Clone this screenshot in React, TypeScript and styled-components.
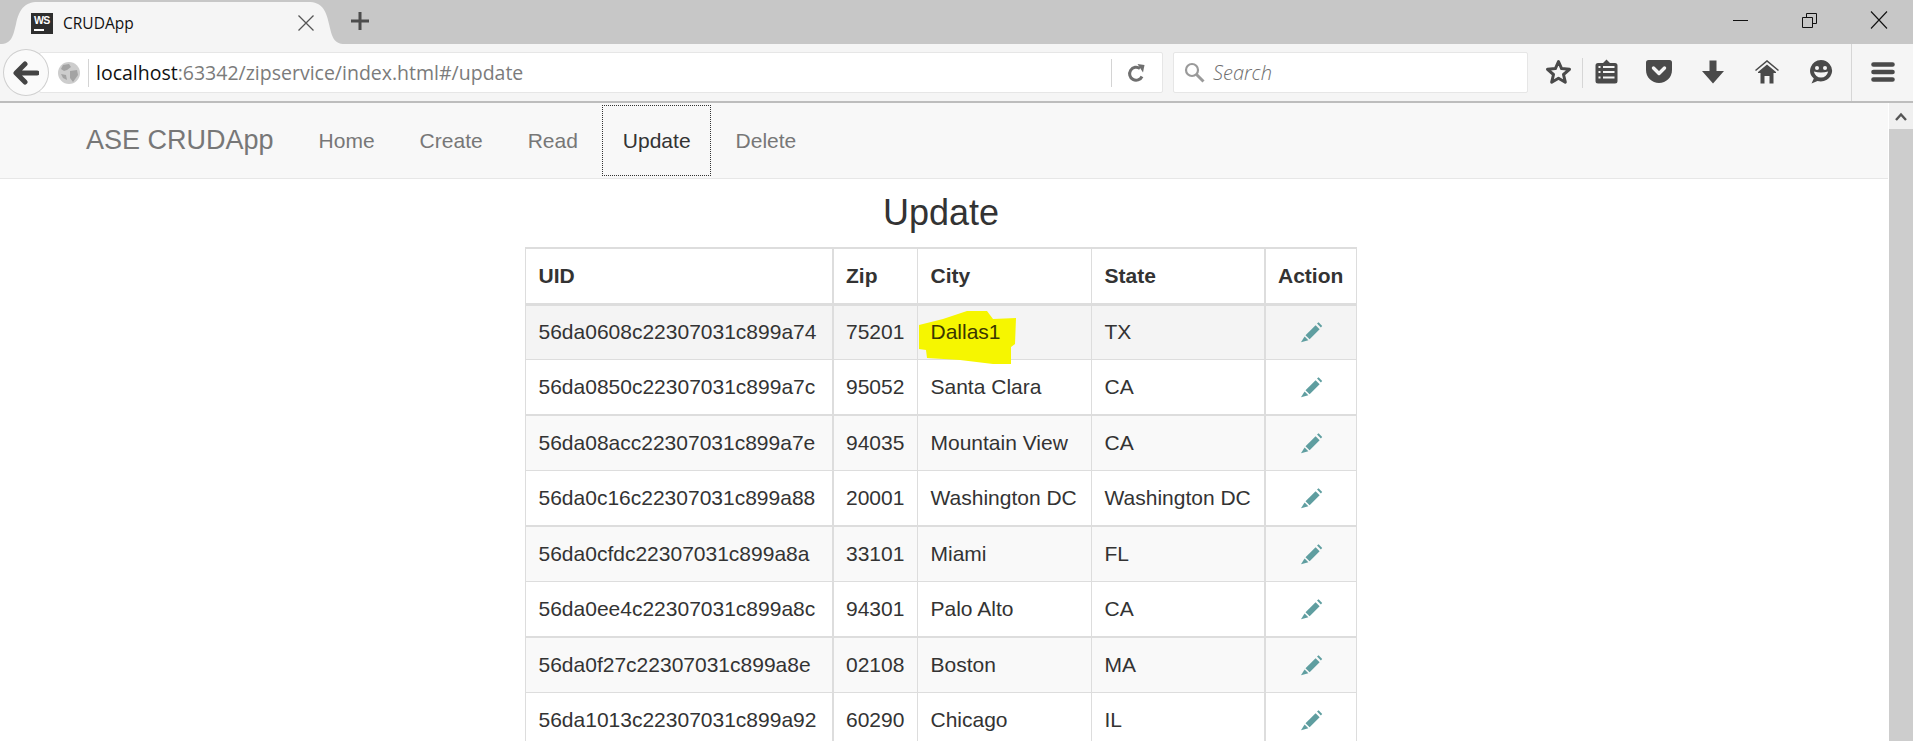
import React from "react";
import styled, { createGlobalStyle } from "styled-components";

const GlobalStyle = createGlobalStyle`
    html, body {
        margin: 0;
        height: 100%;
        overflow: hidden;
        background: white;
    }
    #root {
        height: 100%;
    }
`;

const Page = styled.div`
    display: flex;
    flex-direction: column;
    height: 741px;
    overflow: hidden;
    font-family: "Liberation Sans", Arial, sans-serif;
`;

/* browser chrome */
const TabStrip = styled.div`
    flex: none;
    display: flex;
    align-items: flex-end;
    height: 44px;
    background: #c7c7c7;
`;
const Tab = styled.div`
    position: relative;
    display: flex;
    align-items: center;
    box-sizing: border-box;
    width: 345px;
    height: 42px;
    padding: 0 31px;
`;
const TabShape = styled.svg`
    position: absolute;
    left: 0;
    top: 0;
`;
const WsIcon = styled.div`
    position: relative;
    flex: none;
    box-sizing: border-box;
    width: 22px;
    height: 21px;
    padding: 2px 0 0 3px;
    background: #2e2e2e;
    color: white;
    font-size: 10.5px;
    font-weight: bold;
    line-height: 11px;
    letter-spacing: -0.6px;
    &::after {
        content: "";
        position: absolute;
        left: 3px;
        bottom: 3px;
        width: 10px;
        height: 2px;
        background: white;
    }
`;
const TabTitle = styled.span`
    position: relative;
    margin-left: 10px;
    font-family: "Open Sans", sans-serif;
    font-size: 15.5px;
    color: #111;
`;
const TabClose = styled.svg`
    position: relative;
    margin-left: auto;
    margin-right: -1px;
`;
const NewTab = styled.svg`
    margin: 0 0 3px 5px;
    align-self: center;
`;
const WindowControls = styled.div`
    display: flex;
    margin-left: auto;
    align-self: stretch;
`;
const WindowButton = styled.div`
    display: flex;
    align-items: center;
    justify-content: center;
    width: 69px;
    padding-bottom: 4px;
    box-sizing: border-box;
`;

const Toolbar = styled.div`
    flex: none;
    display: flex;
    align-items: center;
    height: 57px;
    background: #f5f5f5;
    border-bottom: 2px solid #bdbdbd;
`;
const BackButton = styled.div`
    position: relative;
    z-index: 1;
    flex: none;
    display: flex;
    align-items: center;
    justify-content: center;
    box-sizing: border-box;
    width: 46px;
    height: 47px;
    margin-left: 3px;
    border: 1px solid #cfcfcf;
    border-radius: 50%;
    background: #fafafa;
`;
const UrlBar = styled.div`
    flex: none;
    display: flex;
    align-items: center;
    box-sizing: border-box;
    width: 1124px;
    height: 41px;
    margin-left: -10px;
    padding-left: 18px;
    background: white;
    border: 1px solid #e6e6e6;
    border-radius: 2px;
`;
const UrlDivider = styled.div`
    flex: none;
    width: 1px;
    height: 28px;
    background: #d4d4d4;
    margin: 0 7px 0 8px;
`;
const UrlText = styled.div`
    font-family: "Open Sans", sans-serif;
    font-size: 19.5px;
    color: #7b7b7b;
    white-space: nowrap;
    b {
        font-weight: normal;
        color: #111;
    }
`;
const ReloadArea = styled.div`
    display: flex;
    align-items: center;
    margin-left: auto;
    margin-right: 15px;
    svg {
        margin-left: 15px;
    }
`;
const ReloadDivider = styled.div`
    width: 1px;
    height: 28px;
    background: #d4d4d4;
`;
const SearchBox = styled.div`
    flex: none;
    display: flex;
    align-items: center;
    box-sizing: border-box;
    width: 355px;
    height: 41px;
    margin: 0 5px 0 10px;
    padding-left: 10px;
    background: white;
    border: 1px solid #e6e6e6;
    border-radius: 2px;
`;
const SearchHint = styled.span`
    margin-left: 8px;
    font-family: "Open Sans", sans-serif;
    font-size: 20px;
    font-style: italic;
    font-weight: 300;
    color: #6e6e6e;
`;
const IconSlot = styled.div<{ $width: number; $left?: number }>`
    flex: none;
    display: flex;
    align-items: center;
    justify-content: center;
    width: ${(p) => p.$width}px;
    margin-top: -2px;
    margin-left: ${(p) => p.$left || 0}px;
`;
const ToolDivider = styled.div<{ $height: number; $left: number }>`
    flex: none;
    width: 1px;
    height: ${(p) => p.$height}px;
    margin-left: ${(p) => p.$left}px;
    background: #d6d6d6;
`;

/* page inside the browser */
const Viewport = styled.div`
    flex: 1;
    display: flex;
    min-height: 0;
`;
const Content = styled.div`
    flex: 1;
    min-width: 0;
    color: #333;
    font-size: 21px;
    line-height: 30px;
`;
const Scrollbar = styled.div`
    flex: none;
    display: flex;
    flex-direction: column;
    width: 24px;
    margin-left: 1px;
    background: #cdcdcd;
`;
const ScrollUp = styled.div`
    display: flex;
    align-items: center;
    justify-content: center;
    height: 26px;
    background: #f0f0f0;
`;

const Navbar = styled.nav`
    display: flex;
    height: 75px;
    padding-left: 63.5px;
    background: #f8f8f8;
    border-bottom: 1px solid #e7e7e7;
`;
const Brand = styled.div`
    padding: 0 22.5px;
    font-size: 27px;
    line-height: 75px;
    color: #777;
`;
const NavItem = styled.div<{ $active?: boolean }>`
    box-sizing: border-box;
    padding: 0 22.5px;
    line-height: 75px;
    color: ${(p) => (p.$active ? "#333" : "#777")};
    ${(p) =>
        p.$active &&
        `
        outline: 1px dotted #333;
        outline-offset: -3px;
    `}
`;

const Section = styled.div`
    width: 832px;
    margin-left: 525px;
`;
const Title = styled.h2`
    margin: 0;
    padding: 14px 0 14px;
    font-size: 36px;
    font-weight: normal;
    line-height: 40px;
    text-align: center;
    color: #333;
`;
const Table = styled.table`
    width: 831px;
    table-layout: fixed;
    border-collapse: collapse;
    border: 1px solid #ddd;
    border-top: 2px solid #ddd;
    tbody > tr:nth-child(odd):not(:first-child) > td {
        border-top-width: 2px;
    }
`;
const Head = styled.th`
    box-sizing: border-box;
    height: 56px;
    padding: 0 12.5px;
    text-align: left;
    font-weight: bold;
    border: 1px solid #ddd;
    border-bottom: 3px solid #ddd;
    &:nth-child(2),
    &:nth-child(5) {
        border-left-width: 2px;
    }
`;
const Row = styled.tr<{ $shade?: string }>`
    background: ${(p) => p.$shade || "white"};
`;
const Cell = styled.td<{ $center?: boolean }>`
    position: relative;
    box-sizing: border-box;
    height: 55.5px;
    padding: 0 12.5px;
    white-space: nowrap;
    text-align: ${(p) => (p.$center ? "center" : "left")};
    border: 1px solid #ddd;
    &:nth-child(2),
    &:nth-child(5) {
        border-left-width: 2px;
    }
`;
const Marked = styled.span`
    position: relative;
    color: #3b3700;
`;
const Highlight = styled.svg`
    position: absolute;
    left: 0;
    top: 0;
    overflow: visible;
`;
const EditIcon = styled.svg`
    display: block;
    margin: 0 auto;
`;

const rows = [
    ["56da0608c22307031c899a74", "75201", "Dallas1", "TX"],
    ["56da0850c22307031c899a7c", "95052", "Santa Clara", "CA"],
    ["56da08acc22307031c899a7e", "94035", "Mountain View", "CA"],
    ["56da0c16c22307031c899a88", "20001", "Washington DC", "Washington DC"],
    ["56da0cfdc22307031c899a8a", "33101", "Miami", "FL"],
    ["56da0ee4c22307031c899a8c", "94301", "Palo Alto", "CA"],
    ["56da0f27c22307031c899a8e", "02108", "Boston", "MA"],
    ["56da1013c22307031c899a92", "60290", "Chicago", "IL"],
];

const shadeFor = (i: number) => {
    if (i === 0) return "#f4f4f4";
    return i % 2 === 0 ? "#f9f9f9" : "white";
};

const Pencil = () => (
    <EditIcon width="24" height="24" viewBox="0 0 24 24">
        <path d="M6.5 15.2 L16.6 5.3 L20.6 9.3 L10.6 19.3 Z" fill="#5f9ea0" />
        <path d="M18 3.6 L19.6 2.3 L23.2 5.9 L21.9 7.5 Z" fill="#5f9ea0" />
        <path d="M5.6 16.4 L9.4 20.2 L2 22.2 Z" fill="#5f9ea0" />
    </EditIcon>
);

const App = () => {
    return (
        <Page>
            <GlobalStyle />
            <TabStrip>
                <Tab>
                    <TabShape width="345" height="42" viewBox="0 0 345 42">
                        <path d="M0 42 C12 42 13 34 16 22 C19 8 24 0 38 0 L308 0 C322 0 326 8 329 22 C332 34 333 42 345 42 Z" fill="#f5f5f5" />
                    </TabShape>
                    <WsIcon>WS</WsIcon>
                    <TabTitle>CRUDApp</TabTitle>
                    <TabClose width="18" height="18" viewBox="0 0 18 18">
                        <path d="M1.5 1.5 L16.5 16.5 M16.5 1.5 L1.5 16.5" stroke="#555" strokeWidth="1.3" fill="none" />
                    </TabClose>
                </Tab>
                <NewTab width="20" height="20" viewBox="0 0 20 20">
                    <path d="M10 1 V19 M1 10 H19" stroke="#4d4d4d" strokeWidth="3" fill="none" />
                </NewTab>
                <WindowControls>
                    <WindowButton>
                        <svg width="16" height="16" viewBox="0 0 16 16">
                            <path d="M0 8.5 H15" stroke="#111" strokeWidth="1" />
                        </svg>
                    </WindowButton>
                    <WindowButton>
                        <svg width="15" height="15" viewBox="0 0 15 15">
                            <path d="M0.5 4.5 H10.5 V14.5 H0.5 Z" stroke="#111" fill="none" />
                            <path d="M4.5 4 V0.5 H14.5 V10.5 H11" stroke="#111" fill="none" />
                        </svg>
                    </WindowButton>
                    <WindowButton>
                        <svg width="18" height="18" viewBox="0 0 18 18">
                            <path d="M1 0.5 L17 17.5 M17 0.5 L1 17.5" stroke="#111" strokeWidth="1.1" fill="none" />
                        </svg>
                    </WindowButton>
                </WindowControls>
            </TabStrip>

            <Toolbar>
                <BackButton>
                    <svg width="26" height="24" viewBox="0 0 26 24">
                        <path d="M12 3 L3 12 L12 21 M4 12 H24" stroke="#444" strokeWidth="5" fill="none" strokeLinecap="round" strokeLinejoin="round" />
                    </svg>
                </BackButton>
                <UrlBar>
                    <svg width="22" height="22" viewBox="0 0 22 22">
                        <circle cx="11" cy="11" r="11" fill="#cdcdcd" />
                        <path d="M5 3 L11 2 L13 5 L9 8 L6 9 L3 7 Z M12 9 L19 8 L20 13 L15 20 L12 16 Z M3 12 L8 13 L9 18 L5 16 Z" fill="#a3a3a3" />
                    </svg>
                    <UrlDivider />
                    <UrlText>
                        <b>localhost</b>:63342/zipservice/index.html#/update
                    </UrlText>
                    <ReloadArea>
                        <ReloadDivider />
                        <svg width="20" height="22" viewBox="0 0 20 22">
                            <path d="M15 14.5 A6.5 6.5 0 1 1 13 6.5" stroke="#6f6f6f" strokeWidth="3" fill="none" />
                            <path d="M10.5 2 L17.5 3 L16 10.5 Z" fill="#6f6f6f" />
                        </svg>
                    </ReloadArea>
                </UrlBar>
                <SearchBox>
                    <svg width="21" height="21" viewBox="0 0 21 21">
                        <circle cx="8" cy="8" r="6" stroke="#9a9a9a" strokeWidth="2.2" fill="none" />
                        <path d="M12.5 12.5 L19.5 19.5" stroke="#9a9a9a" strokeWidth="3" />
                    </svg>
                    <SearchHint>Search</SearchHint>
                </SearchBox>
                <IconSlot $width={50}>
                    <svg width="27" height="26" viewBox="0 0 27 26">
                        <path d="M13.5 2.5 L16.6 9.6 L24.5 10.3 L18.5 15.5 L20.3 23.2 L13.5 19.2 L6.7 23.2 L8.5 15.5 L2.5 10.3 L10.4 9.6 Z" stroke="#4a4a4a" strokeWidth="3" strokeLinejoin="round" fill="none" />
                    </svg>
                </IconSlot>
                <ToolDivider $height={30} $left={-1} />
                <IconSlot $width={46}>
                    <svg width="23" height="25" viewBox="0 0 23 25">
                        <path d="M3 4 H8 L11.5 0.5 L15 4 H20 Q22.5 4 22.5 6.5 V22 Q22.5 24.5 20 24.5 H3 Q0.5 24.5 0.5 22 V6.5 Q0.5 4 3 4 Z" fill="#4a4a4a" />
                        <path d="M8 8 H19.5 M8 13 H19.5 M8 18.5 H19.5" stroke="#f5f5f5" strokeWidth="2" />
                        <path d="M3.5 8 H5.5 M3.5 13 H5.5 M3.5 18.5 H5.5" stroke="#f5f5f5" strokeWidth="2" />
                    </svg>
                </IconSlot>
                <IconSlot $width={54} $left={3}>
                    <svg width="26" height="23" viewBox="0 0 26 23">
                        <path d="M2.5 0 H23.5 Q26 0 26 2.5 V10 C26 17.5 20 23 13 23 C6 23 0 17.5 0 10 V2.5 Q0 0 2.5 0 Z" fill="#4a4a4a" />
                        <path d="M7.5 8 L13 13.5 L18.5 8" stroke="#f5f5f5" strokeWidth="3.4" strokeLinecap="round" strokeLinejoin="round" fill="none" />
                    </svg>
                </IconSlot>
                <IconSlot $width={54}>
                    <svg width="22" height="24" viewBox="0 0 22 24">
                        <path d="M7.5 0.5 H14.5 V11 H22 L11 23.5 L0 11 H7.5 Z" fill="#4a4a4a" />
                    </svg>
                </IconSlot>
                <IconSlot $width={54}>
                    <svg width="24" height="24" viewBox="0 0 24 24">
                        <path d="M0.5 10.5 L12 1 L23.5 10.5" stroke="#4a4a4a" strokeWidth="1.6" fill="none" />
                        <path d="M12 4.5 L21 12 V13 H18.5 V23.5 H14.5 V16 H9.5 V23.5 H5.5 V13 H3 V12 Z" fill="#4a4a4a" />
                    </svg>
                </IconSlot>
                <IconSlot $width={54}>
                    <svg width="24" height="24" viewBox="0 0 24 24">
                        <path d="M12 0 A11.5 10.7 0 1 1 8.5 21 L2.5 23.5 L4.8 18.5 A11.5 10.7 0 0 1 12 0 Z" fill="#4a4a4a" />
                        <circle cx="8" cy="8" r="2" fill="#f5f5f5" />
                        <circle cx="16" cy="8" r="2" fill="#f5f5f5" />
                        <path d="M4.8 11.5 Q12 13.5 19.2 11.5 Q17.5 17.5 12 17.5 Q6.5 17.5 4.8 11.5 Z" fill="#f5f5f5" />
                    </svg>
                </IconSlot>
                <ToolDivider $height={57} $left={3} />
                <IconSlot $width={61}>
                    <svg width="24" height="20" viewBox="0 0 24 20">
                        <path d="M2.5 2.5 H21.5 M2.5 10 H21.5 M2.5 17.5 H21.5" stroke="#4a4a4a" strokeWidth="4.6" strokeLinecap="round" />
                    </svg>
                </IconSlot>
            </Toolbar>

            <Viewport>
                <Content>
                    <Navbar>
                        <Brand>ASE CRUDApp</Brand>
                        <NavItem>Home</NavItem>
                        <NavItem>Create</NavItem>
                        <NavItem>Read</NavItem>
                        <NavItem $active>Update</NavItem>
                        <NavItem>Delete</NavItem>
                    </Navbar>
                    <Section>
                        <Title>Update</Title>
                        <Table>
                            <colgroup>
                                <col width="307" />
                                <col width="85" />
                                <col width="174" />
                                <col width="173" />
                                <col width="92" />
                            </colgroup>
                            <thead>
                                <tr>
                                    <Head>UID</Head>
                                    <Head>Zip</Head>
                                    <Head>City</Head>
                                    <Head>State</Head>
                                    <Head>Action</Head>
                                </tr>
                            </thead>
                            <tbody>
                                {rows.map((r, i) => (
                                    <Row key={r[0]} $shade={shadeFor(i)}>
                                        <Cell>{r[0]}</Cell>
                                        <Cell>{r[1]}</Cell>
                                        <Cell>
                                            {i === 0 && (
                                                <Highlight width="100" height="60" viewBox="0 0 100 60">
                                                    <polygon points="1,19 25,13 49,5 69,5 75,13 98,12 97,38 93,41 93,58 75,58 42,54 9,52 8,44 1,43" fill="#f6f600" />
                                                </Highlight>
                                            )}
                                            {i === 0 ? <Marked>{r[2]}</Marked> : r[2]}
                                        </Cell>
                                        <Cell>{r[3]}</Cell>
                                        <Cell $center>
                                            <Pencil />
                                        </Cell>
                                    </Row>
                                ))}
                            </tbody>
                        </Table>
                    </Section>
                </Content>
                <Scrollbar>
                    <ScrollUp>
                        <svg width="12" height="9" viewBox="0 0 12 9">
                            <path d="M1 8 L6 2.5 L11 8" stroke="#555" strokeWidth="2.4" fill="none" />
                        </svg>
                    </ScrollUp>
                </Scrollbar>
            </Viewport>
        </Page>
    );
};

export default App;
